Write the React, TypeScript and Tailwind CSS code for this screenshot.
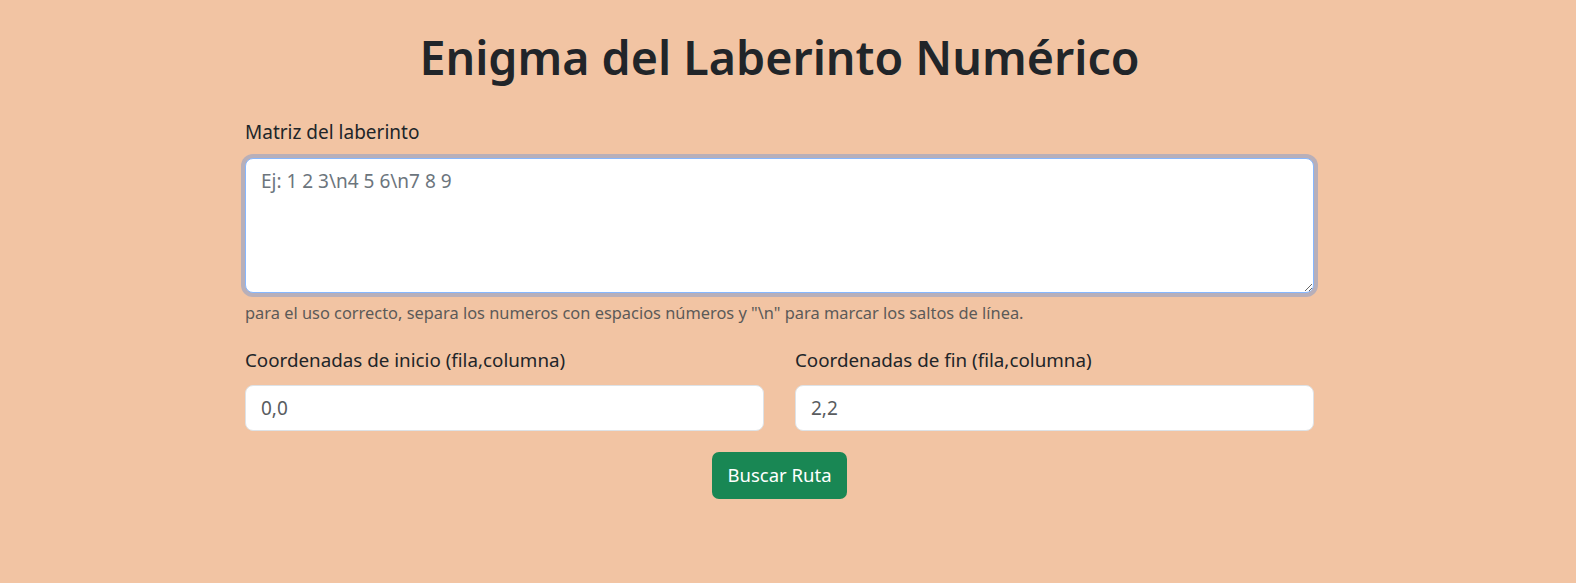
import { useState } from "react";

export default function App() {
  const [matrix, setMatrix] = useState("");
  const [start, setStart] = useState("");
  const [end, setEnd] = useState("");

  return (
    <div
      className="min-h-screen bg-[#f2c4a3] pr-[17px] text-[#212529]"
      style={{ fontFamily: '"Noto Sans", "Open Sans", sans-serif' }}
    >
      <h1 className="pt-[28px] text-center text-[46.6px] font-semibold leading-[1.25]">
        Enigma del Laberinto Numérico
      </h1>

      <form className="mx-auto mt-[32px] w-[1069px]">
        <label htmlFor="matrix" className="mb-[11px] block text-[19px] leading-[1.5]">
          Matriz del laberinto
        </label>
        <textarea
          id="matrix"
          autoFocus
          value={matrix}
          onChange={(e) => setMatrix(e.target.value)}
          placeholder="Ej: 1 2 3\n4 5 6\n7 8 9"
          className="block h-[135px] w-full rounded-[8px] border border-[#86b7fe] bg-white px-[15px] py-[8px] text-[19px] leading-[1.5] text-[#212529] shadow-[0_0_0_4px_rgba(13,110,253,0.25)] outline-none placeholder:text-[#6c757d]"
        />
        <p className="mt-[8px] text-[16.4px] leading-[1.5] text-[#5c5a58]">
          para el uso correcto, separa los numeros con espacios números y "\n" para marcar los saltos de línea.
        </p>

        <div className="mt-[21px] grid grid-cols-2 gap-x-[31px]">
          <div>
            <label htmlFor="start" className="mb-[10px] block text-[18.8px] leading-[1.5]">
              Coordenadas de inicio (fila,columna)
            </label>
            <input
              id="start"
              value={start}
              onChange={(e) => setStart(e.target.value)}
              placeholder="0,0"
              className="block h-[46px] w-full rounded-[8px] border border-[#dee2e6] bg-white px-[15px] text-[19px] outline-none placeholder:text-[#595c5f]"
            />
          </div>
          <div>
            <label htmlFor="end" className="mb-[10px] block text-[18.8px] leading-[1.5]">
              Coordenadas de fin (fila,columna)
            </label>
            <input
              id="end"
              value={end}
              onChange={(e) => setEnd(e.target.value)}
              placeholder="2,2"
              className="block h-[46px] w-full rounded-[8px] border border-[#dee2e6] bg-white px-[15px] text-[19px] outline-none placeholder:text-[#595c5f]"
            />
          </div>
        </div>

        <div className="mt-[21px] flex justify-center">
          <button
            type="button"
            className="h-[47px] w-[135px] rounded-[7px] bg-[#198754] text-[18.5px] text-white"
          >
            Buscar Ruta
          </button>
        </div>
      </form>
    </div>
  );
}
